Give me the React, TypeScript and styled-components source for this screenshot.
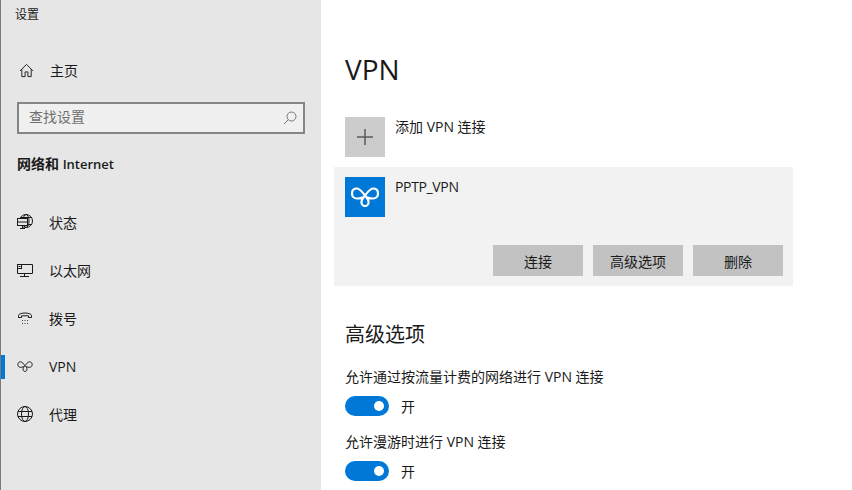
import React from "react";
import styled, { createGlobalStyle } from "styled-components";

const FONT = `"Open Sans", "Noto Sans CJK SC", sans-serif`;

const Global = createGlobalStyle`
  html, body { margin: 0; padding: 0; background: #fff; overflow: hidden; }
  * { box-sizing: border-box; }
  body { font-family: ${FONT}; }
`;

const Page = styled.div`
  display: flex; width: 852px; height: 490px; overflow: hidden; font-family: ${FONT}; color: #1a1a1a;
`;
const Sidebar = styled.aside`
  width: 321px; height: 490px; background: #e6e6e6; border-left: 1px solid #7a7a7a; display: flex; flex-direction: column; flex-shrink: 0;
`;
const AppTitle = styled.div`
  font-size: 12px; line-height: 16px; padding: 7px 0 0 14px; height: 46px;
`;
const HomeRow = styled.div`
  display: flex; align-items: center; height: 48px; padding-left: 18px; gap: 16px; font-size: 14px;
`;
const SearchBox = styled.div`
  margin: 8px 0 0 16px; width: 288px; height: 32px; border: 2px solid #858585; background: #f0f0f0; display: flex; align-items: center; justify-content: space-between; padding: 0 6px 0 10px; font-size: 14px; color: #6f6f6f;
`;
const SearchHint = styled.span`
  margin-top: -4px;
`;
const SectionLabel = styled.div`
  margin: 21px 0 0 16px; font-size: 14px; line-height: 18px; font-weight: 700; color: #1a1a1a;
`;
const SectionLatin = styled.span`
  font-size: 13px; font-weight: 600;
`;
const NavList = styled.nav`
  display: flex; flex-direction: column; margin-top: 25px;
`;
const NavRow = styled.div<{ $active?: boolean }>`
  position: relative; display: flex; align-items: center; height: 48px; padding-left: 16px; gap: 16px; font-size: 14px;
  &::before {
    content: ""; position: absolute; left: 0; top: 13px; width: 4px; height: 24px; background: #0078d7; display: ${(p) => (p.$active ? "block" : "none")};
  }
`;
const IconSlot = styled.span`
  width: 16px; height: 16px; display: flex; align-items: center; justify-content: center; flex-shrink: 0;
`;
const Main = styled.main`
  flex: 1; height: 490px; overflow: hidden; padding: 0 0 0 24px; display: flex; flex-direction: column;
  & > * { flex-shrink: 0; }
`;
const PageTitle = styled.h1`
  margin: 51px 0 0; font-size: 28px; line-height: 36px; font-weight: 400; height: 66px;
`;
const AddRow = styled.div`
  display: flex; gap: 10px; font-size: 14px; line-height: 20px;
`;
const Tile = styled.div<{ $blue?: boolean }>`
  width: 40px; height: 40px; background: ${(p) => (p.$blue ? "#0078d7" : "#cccccc")}; display: flex; align-items: center; justify-content: center; flex-shrink: 0;
`;
const TileLabel = styled.div``;
const ConnectionName = styled.div`
  letter-spacing: -0.35px;
`;
const Card = styled.section`
  margin: 10px 0 0 -11px; width: 459px; height: 119px; background: #f2f2f2; padding: 10px 10px 10px 11px; display: flex; flex-direction: column; justify-content: space-between;
`;
const CardTop = styled.div`
  display: flex; gap: 10px; font-size: 14px; line-height: 20px;
`;
const CardActions = styled.div`
  display: flex; justify-content: flex-end; gap: 10px;
`;
const ActionButton = styled.button`
  width: 90px; height: 31px; border: 0; background: #c2c2c2; font-family: ${FONT}; font-size: 14px; color: #1a1a1a; padding: 0;
`;
const SectionTitle = styled.h2`
  margin: 36px 0 0; font-size: 20px; line-height: 26px; font-weight: 400; height: 45px;
`;
const Setting = styled.div`
  display: flex; flex-direction: column; height: 65px;
`;
const SettingLabel = styled.div`
  font-size: 14px; line-height: 20px; height: 29px;
`;
const ToggleRow = styled.div`
  display: flex; align-items: center; gap: 12px; font-size: 14px; height: 20px;
`;
const Track = styled.div`
  position: relative; width: 44px; height: 20px; border-radius: 10px; background: #0078d7;
  &::after { content: ""; position: absolute; right: 5px; top: 5px; width: 10px; height: 10px; border-radius: 50%; background: #fff; }
`;

const S = { fill: "none", stroke: "#1a1a1a", strokeWidth: 1 };

const HomeIcon = () => (
  <svg width="15" height="15" viewBox="0 0 16 16" {...S}>
    <path d="M1 8.5 8 1.5l7 7M3 6.8V14.5h3.5V9.5h3v5H13V6.8" />
  </svg>
);
const SearchIcon = () => (
  <svg width="14" height="14" viewBox="0 0 14 14" fill="none" stroke="#777" strokeWidth="1">
    <circle cx="8.5" cy="5.5" r="4.5" />
    <path d="M5.3 8.7 1 13" />
  </svg>
);
const StatusIcon = () => (
  <svg width="16" height="16" viewBox="0 0 16 16" {...S}>
    <circle cx="9" cy="7" r="6.5" />
    <ellipse cx="9" cy="7" rx="3" ry="6.5" />
    <path d="M3 3.5h12M3 10.5h12" />
    <rect x=".5" y="4.5" width="10" height="7" fill="#e6e6e6" />
    <path d="M.5 8h10M5.5 11.5v3M3 14.5h5" />
  </svg>
);
const EthernetIcon = () => (
  <svg width="16" height="13" viewBox="0 0 16 13" {...S}>
    <path d="M5 .5H15.5V9.5H.5V5M3 12.5h9M7.5 9.5v3" />
    <rect x=".5" y=".5" width="4" height="4" />
    <path d="M1.5 2.5h2" />
  </svg>
);
const DialIcon = () => (
  <svg width="14" height="12" viewBox="0 0 14 12" fill="none">
    <path d="M.5 5.5V3.5C1 .2 13 .2 13.5 3.5V5.5H10.5V3.8H3.5V5.5Z" stroke="#1a1a1a" />
    <path d="M4 8.5h1M6.5 8.5h1M9 8.5h1M4 11.5h1M6.5 11.5h1M9 11.5h1" stroke="#444" />
  </svg>
);
const VpnGlyph = ({ w, h, color, stroke }: { w: number; h: number; color: string; stroke: number }) => (
  <svg width={w} height={h} viewBox="0 0 28 20" fill="none" stroke={color} strokeWidth={stroke} strokeLinecap="round" strokeLinejoin="round">
    <path d="M11.2 10.6C9 11.4 7.5 11.5 5.8 11.5C3 11.5 1 9.3 1 6.4C1 3.4 3 1.5 5.8 1.5C9 1.5 11.5 5.5 14 8.5C16 11 17.6 12.5 17.6 15C17.6 17.2 16 19 14 19C12 19 10.4 17.2 10.4 15C10.4 12.5 12 11 14 8.5C16.5 5.5 19 1.5 22.2 1.5C25 1.5 27 3.4 27 6.4C27 9.3 25 11.5 22.2 11.5C20.5 11.5 19 11.4 16.8 10.6" />
  </svg>
);
const GlobeIcon = () => (
  <svg width="16" height="16" viewBox="0 0 16 16" {...S}>
    <circle cx="8" cy="8" r="7.5" />
    <ellipse cx="8" cy="8" rx="3.5" ry="7.5" />
    <path d="M1 5.5h14M1 10.5h14" />
  </svg>
);
const PlusIcon = () => (
  <svg width="16" height="16" viewBox="0 0 16 16" stroke="#5a5a5a" strokeWidth="1.5">
    <path d="M8 0v16M0 8h16" />
  </svg>
);

const nav = [
  { label: "状态", icon: <StatusIcon /> },
  { label: "以太网", icon: <EthernetIcon /> },
  { label: "拨号", icon: <DialIcon /> },
  { label: "VPN", icon: <VpnGlyph w={16} h={11} color="#1a1a1a" stroke={1.8} />, active: true },
  { label: "代理", icon: <GlobeIcon /> },
];

export default function App() {
  return (
    <Page>
      <Global />
      <Sidebar>
        <AppTitle>设置</AppTitle>
        <HomeRow><HomeIcon />主页</HomeRow>
        <SearchBox><SearchHint>查找设置</SearchHint><SearchIcon /></SearchBox>
        <SectionLabel>网络和 <SectionLatin>Internet</SectionLatin></SectionLabel>
        <NavList>
          {nav.map((n) => (
            <NavRow key={n.label} $active={n.active}><IconSlot>{n.icon}</IconSlot>{n.label}</NavRow>
          ))}
        </NavList>
      </Sidebar>
      <Main>
        <PageTitle>VPN</PageTitle>
        <AddRow>
          <Tile><PlusIcon /></Tile>
          <TileLabel>添加 VPN 连接</TileLabel>
        </AddRow>
        <Card>
          <CardTop>
            <Tile $blue><VpnGlyph w={28} h={20} color="#fff" stroke={2.2} /></Tile>
            <ConnectionName>PPTP_VPN</ConnectionName>
          </CardTop>
          <CardActions>
            <ActionButton>连接</ActionButton>
            <ActionButton>高级选项</ActionButton>
            <ActionButton>删除</ActionButton>
          </CardActions>
        </Card>
        <SectionTitle>高级选项</SectionTitle>
        <Setting>
          <SettingLabel>允许通过按流量计费的网络进行 VPN 连接</SettingLabel>
          <ToggleRow><Track />开</ToggleRow>
        </Setting>
        <Setting>
          <SettingLabel>允许漫游时进行 VPN 连接</SettingLabel>
          <ToggleRow><Track />开</ToggleRow>
        </Setting>
      </Main>
    </Page>
  );
}
